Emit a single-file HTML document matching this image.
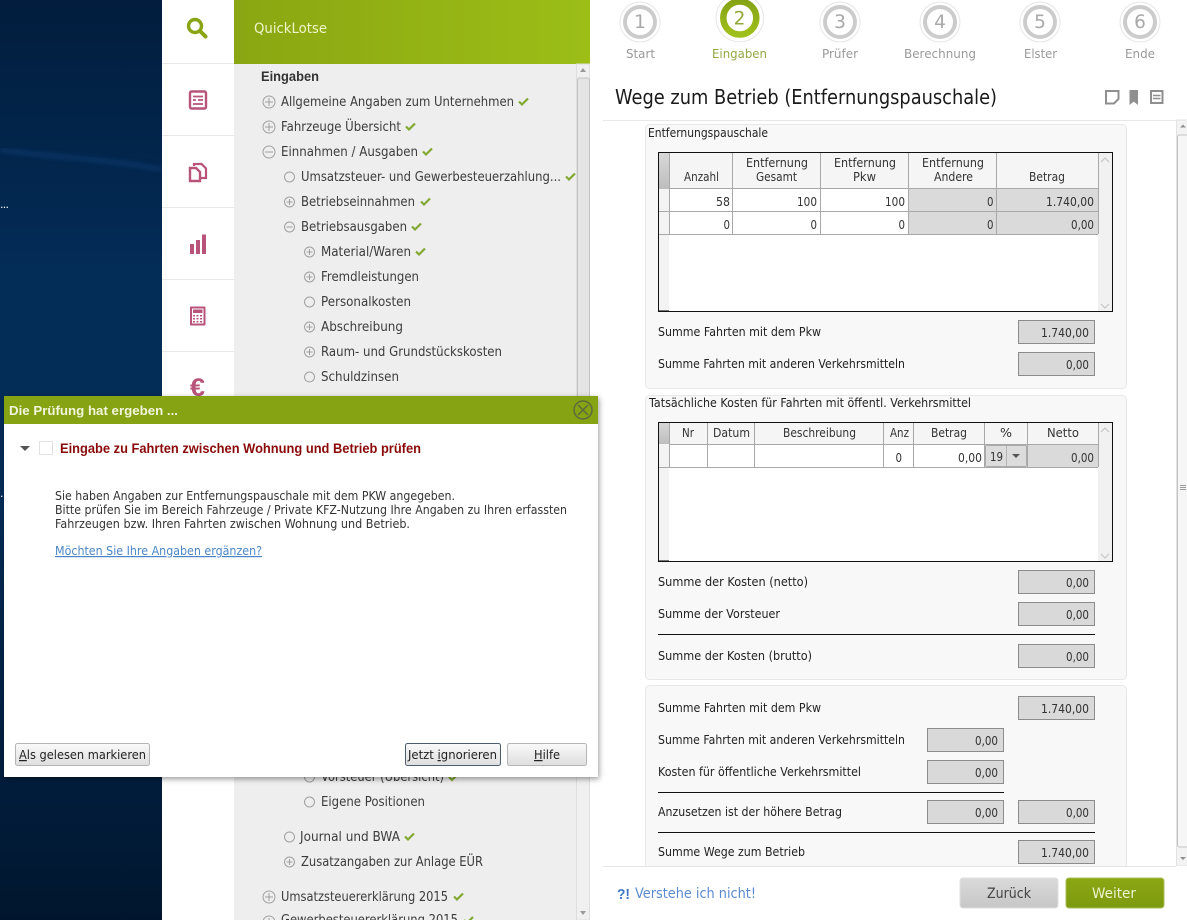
<!DOCTYPE html>
<html lang="de"><head><meta charset="utf-8"><title>Wege zum Betrieb</title>
<style>
html,body{margin:0;padding:0;width:1187px;height:920px;overflow:hidden;background:#fff}
svg{display:block;position:absolute;left:0;top:0}
text{font-family:"DejaVu Sans","Liberation Sans",sans-serif;white-space:pre}
.b{font-family:"Liberation Sans",sans-serif;font-weight:700}
.tr{font-size:13px;fill:#3c3c3c}
.lb{font-size:12px;fill:#222}
.th{font-size:12px;fill:#333}
.nu{font-size:12.5px;fill:#333}
.st{font-size:12.5px;fill:#9a9a9a}
.dg{font-size:18.5px;fill:#a8a8a8;text-anchor:middle}
.dl{font-size:12px;fill:#333}
.bt{font-size:12.5px;fill:#222}
.f{fill:#d9d9d9;stroke:#8c8c8c;stroke-width:1}
.ic{fill:none;stroke:#a0a0a0;stroke-width:1}
.ck{fill:none;stroke:#82a832;stroke-width:2.2}
.g{stroke:#a8a8a8;stroke-width:1;fill:none}
</style></head><body>
<svg width="1187" height="920" viewBox="0 0 1187 920" xmlns="http://www.w3.org/2000/svg">
<defs>
<linearGradient id="bg" x1="0" y1="0" x2="0" y2="1"><stop offset="0" stop-color="#021d3d"/><stop offset=".3" stop-color="#032c57"/><stop offset=".55" stop-color="#032c56"/><stop offset=".8" stop-color="#011f40"/><stop offset="1" stop-color="#01162e"/></linearGradient>
<linearGradient id="hd" x1="0" y1="0" x2="1" y2="0"><stop offset="0" stop-color="#8aa612"/><stop offset="1" stop-color="#9cbe17"/></linearGradient>
<linearGradient id="ring" x1="0" y1="0" x2="0" y2="1"><stop offset="0" stop-color="#86a314"/><stop offset="1" stop-color="#9fc01c"/></linearGradient>
<linearGradient id="bw" x1="0" y1="0" x2="0" y2="1"><stop offset="0" stop-color="#fafafa"/><stop offset="1" stop-color="#dedede"/></linearGradient>
<linearGradient id="zb" x1="0" y1="0" x2="0" y2="1"><stop offset="0" stop-color="#dadada"/><stop offset="1" stop-color="#c6c6c6"/></linearGradient>
<linearGradient id="wb" x1="0" y1="0" x2="0" y2="1"><stop offset="0" stop-color="#8ba713"/><stop offset="1" stop-color="#7d9a10"/></linearGradient>
<linearGradient id="rh" x1="0" y1="0" x2="0" y2="1"><stop offset="0" stop-color="#d8d8d8"/><stop offset="1" stop-color="#bdbdbd"/></linearGradient>
<filter id="sh" x="-5%" y="-5%" width="110%" height="110%"><feDropShadow dx="1" dy="2" stdDeviation="3" flood-color="#000" flood-opacity=".4"/></filter>
<filter id="bl"><feGaussianBlur stdDeviation="2.5"/></filter>
</defs>

<!-- desktop -->
<rect width="162" height="920" fill="url(#bg)"/>
<path d="M0 150C60 158 120 160 162 170" stroke="#0a4175" stroke-width="5" fill="none" opacity=".55" filter="url(#bl)"/>
<text x="0" y="208" font-size="11" fill="#fff" textLength="9">...</text>
<text x="0" y="497" font-size="11" fill="#fff">.</text>

<!-- icon rail -->
<rect x="162" width="72" height="920" fill="#fff"/>
<g stroke="#e8e8e8"><path d="M162 63.500H234M162 135.500H234M162 207.500H234M162 279.500H234M162 351.500H234"/></g>
<circle cx="195" cy="26" r="6.500" fill="none" stroke="#89a414" stroke-width="3.400"/>
<path d="M200 31L205.500 36.500" stroke="#89a414" stroke-width="4" stroke-linecap="round"/>
<g fill="none" stroke="#b8537a">
<rect x="190" y="91.500" width="16" height="17" rx="1.500" stroke-width="2.400"/>
<path d="M193 96.500H203M198 100H203M193 100H196M193 104H203" stroke-width="1.800"/>
<path d="M194 166V164H201.500L206 168.500V178H201" stroke-width="2.200"/>
<path d="M190 168H196L200 172V181H190Z" stroke-width="2.400"/>
</g>
<g fill="#b8537a">
<rect x="190" y="244" width="4" height="10"/><rect x="196" y="240" width="4" height="14"/><rect x="202" y="234.500" width="4" height="19.500"/>
<path d="M191 306.500H204.500a1 1 0 0 1 1 1V324.500a1 1 0 0 1-1 1H191a1 1 0 0 1-1-1V307.500a1 1 0 0 1 1-1ZM192 308.500V323.500H203.500V308.500Z" fill-rule="evenodd"/>
<rect x="193" y="309.500" width="9.500" height="3.500"/>
<path d="M193 315h2v1.500h-2zM196.500 315h2v1.500h-2zM200 315h2v1.500h-2zM193 318h2v1.500h-2zM196.500 318h2v1.500h-2zM200 318h2v1.500h-2zM193 321h2v1.500h-2zM196.500 321h2v1.500h-2zM200 321h2v1.500h-2z"/>
</g>
<text class="b" x="190" y="396" font-size="25" fill="#b8537a" textLength="15" lengthAdjust="spacingAndGlyphs">€</text>

<!-- tree panel -->
<rect x="234" width="356" height="920" fill="#eeeeee"/>
<rect x="234" width="356" height="64" fill="url(#hd)"/>
<text x="254" y="33" font-size="14" fill="#f0f5c8" textLength="73" lengthAdjust="spacingAndGlyphs">QuickLotse</text>
<rect x="576.500" y="64" width="13" height="856" fill="#f0f0f0" stroke="#dedede"/>
<rect x="577.500" y="78" width="12" height="500" rx="2" fill="#e4e4e4" stroke="#c2c2c2"/>
<path d="M580 72L583 68L586 72ZM580 911L586 911L583 915Z" fill="#9a9a9a"/>

<text class="b" x="261" y="81" font-size="13.500" fill="#333" textLength="58" lengthAdjust="spacingAndGlyphs">Eingaben</text>
<g class="tr">
<text class="tr" x="281" y="106" textLength="233" lengthAdjust="spacingAndGlyphs">Allgemeine Angaben zum Unternehmen</text>
<text class="tr" x="281" y="131" textLength="120" lengthAdjust="spacingAndGlyphs">Fahrzeuge Übersicht</text>
<text class="tr" x="281" y="156" textLength="137" lengthAdjust="spacingAndGlyphs">Einnahmen / Ausgaben</text>
<text class="tr" x="301" y="181" textLength="260" lengthAdjust="spacingAndGlyphs">Umsatzsteuer- und Gewerbesteuerzahlung...</text>
<text class="tr" x="301" y="206" textLength="114" lengthAdjust="spacingAndGlyphs">Betriebseinnahmen</text>
<text class="tr" x="301" y="231" textLength="106" lengthAdjust="spacingAndGlyphs">Betriebsausgaben</text>
<text class="tr" x="321" y="256" textLength="90" lengthAdjust="spacingAndGlyphs">Material/Waren</text>
<text class="tr" x="321" y="281" textLength="98" lengthAdjust="spacingAndGlyphs">Fremdleistungen</text>
<text class="tr" x="321" y="306" textLength="90" lengthAdjust="spacingAndGlyphs">Personalkosten</text>
<text class="tr" x="321" y="331" textLength="82" lengthAdjust="spacingAndGlyphs">Abschreibung</text>
<text class="tr" x="321" y="356" textLength="181" lengthAdjust="spacingAndGlyphs">Raum- und Grundstückskosten</text>
<text class="tr" x="321" y="381" textLength="78" lengthAdjust="spacingAndGlyphs">Schuldzinsen</text>
<text class="tr" x="321" y="781" textLength="123" lengthAdjust="spacingAndGlyphs">Vorsteuer (Übersicht)</text>
<text class="tr" x="321" y="806" textLength="104" lengthAdjust="spacingAndGlyphs">Eigene Positionen</text>
<text class="tr" x="300" y="841" textLength="100" lengthAdjust="spacingAndGlyphs">Journal und BWA</text>
<text class="tr" x="301" y="866" textLength="182" lengthAdjust="spacingAndGlyphs">Zusatzangaben zur Anlage EÜR</text>
<text class="tr" x="281" y="901" textLength="167" lengthAdjust="spacingAndGlyphs">Umsatzsteuererklärung 2015</text>
<text class="tr" x="281" y="924" textLength="177" lengthAdjust="spacingAndGlyphs">Gewerbesteuererklärung 2015</text>
</g>
<!-- tree icons -->
<g class="ic">
<circle cx="269" cy="102" r="6"/><path d="M265 102H273M269 98V106"/>
<circle cx="269" cy="127" r="6"/><path d="M265 127H273M269 123V131"/>
<circle cx="269" cy="152" r="6"/><path d="M265 152H273"/>
<circle cx="289.500" cy="177" r="5"/>
<circle cx="289.500" cy="202" r="5"/><path d="M286.500 202H292.500M289.500 199V205"/>
<circle cx="289.500" cy="227" r="5"/><path d="M286.500 227H292.500"/>
<circle cx="309.500" cy="252" r="5"/><path d="M306.500 252H312.500M309.500 249V255"/>
<circle cx="309.500" cy="277" r="5"/><path d="M306.500 277H312.500M309.500 274V280"/>
<circle cx="309.500" cy="302" r="5"/>
<circle cx="309.500" cy="327" r="5"/><path d="M306.500 327H312.500M309.500 324V330"/>
<circle cx="309.500" cy="352" r="5"/><path d="M306.500 352H312.500M309.500 349V355"/>
<circle cx="309.500" cy="377" r="5"/>
<circle cx="309.500" cy="777" r="5"/>
<circle cx="309.500" cy="802" r="5"/>
<circle cx="289.500" cy="837" r="5"/>
<circle cx="289.500" cy="862" r="5"/><path d="M286.500 862H292.500M289.500 859V865"/>
<circle cx="269" cy="897" r="6"/><path d="M265 897H273M269 893V901"/>
<circle cx="269" cy="922" r="6"/><path d="M265 922H273M269 918V926"/>
</g>
<g class="ck">
<path d="M519 101.500L522 104.500L528 98.500"/>
<path d="M406 126.500L409 129.500L415 123.500"/>
<path d="M423 151.500L426 154.500L432 148.500"/>
<path d="M566 176.500L569 179.500L575 173.500"/>
<path d="M421 201.500L424 204.500L430 198.500"/>
<path d="M412 226.500L415 229.500L421 223.500"/>
<path d="M416 251.500L419 254.500L425 248.500"/>
<path d="M449 777L452 780L458 774"/>
<path d="M405 836.500L408 839.500L414 833.500"/>
<path d="M454 896.500L457 899.500L463 893.500"/>
<path d="M464 920L467 923L473 917"/>
</g>

<!-- right pane -->
<rect x="590" width="597" height="920" fill="#fff"/>
<!-- steps -->
<g fill="none">
<circle cx="640" cy="22" r="20" stroke="#e6e6e6"/><circle cx="640" cy="22" r="15" stroke="#cccccc" stroke-width="4"/>
<circle cx="840" cy="22" r="20" stroke="#e6e6e6"/><circle cx="840" cy="22" r="15" stroke="#cccccc" stroke-width="4"/>
<circle cx="940" cy="22" r="20" stroke="#e6e6e6"/><circle cx="940" cy="22" r="15" stroke="#cccccc" stroke-width="4"/>
<circle cx="1040" cy="22" r="20" stroke="#e6e6e6"/><circle cx="1040" cy="22" r="15" stroke="#cccccc" stroke-width="4"/>
<circle cx="1140" cy="22" r="20" stroke="#e6e6e6"/><circle cx="1140" cy="22" r="15" stroke="#cccccc" stroke-width="4"/>
<circle cx="739.800" cy="18" r="23.800" stroke="#e6e6e6"/><circle cx="739.800" cy="18" r="16.500" stroke="url(#ring)" stroke-width="6.500"/>
</g>
<text class="dg" x="640" y="28">1</text><text class="dg" x="739.500" y="24.500" style="fill:#90a83a">2</text><text class="dg" x="840" y="28">3</text><text class="dg" x="940" y="28">4</text><text class="dg" x="1040" y="28">5</text><text class="dg" x="1140" y="28">6</text>
<text class="st" x="626" y="58" textLength="29" lengthAdjust="spacingAndGlyphs">Start</text>
<text class="st" x="712" y="58" textLength="55" lengthAdjust="spacingAndGlyphs" style="fill:#93a843">Eingaben</text>
<text class="st" x="822" y="58" textLength="36" lengthAdjust="spacingAndGlyphs">Prüfer</text>
<text class="st" x="904" y="58" textLength="72" lengthAdjust="spacingAndGlyphs">Berechnung</text>
<text class="st" x="1024" y="58" textLength="33" lengthAdjust="spacingAndGlyphs">Elster</text>
<text class="st" x="1125" y="58" textLength="30" lengthAdjust="spacingAndGlyphs">Ende</text>

<text x="615" y="104" font-size="20" fill="#1a1a1a" textLength="382" lengthAdjust="spacingAndGlyphs">Wege zum Betrieb (Entfernungspauschale)</text>
<g fill="none" stroke="#8f8f8f" stroke-width="2">
<path d="M1106 91H1118.500V99L1114 103.500H1106Z"/>
<path d="M1130 90.500H1137.500V104L1133.750 101L1130 104Z" fill="#8f8f8f" stroke-width="1"/>
<rect x="1151" y="91" width="11.500" height="12"/><path d="M1153 95.500H1160.500M1153 98.500H1160.500" stroke-width="1.500"/>
</g>
<path d="M603 120.500H1177" stroke="#e8e8e8"/>

<!-- right scrollbar -->
<rect x="1176.500" y="120" width="11" height="746" fill="#f3f3f3" stroke="#e2e2e2"/>
<rect x="1177.500" y="135" width="11" height="712" rx="2" fill="#f6f6f6" stroke="#c4c4c4"/>
<path d="M1180 127.500L1183 124.500L1186 127.500ZM1180 857L1186 857L1183 860Z" fill="#8f8f8f"/>
<path d="M1180 485.500H1186M1180 487.500H1186M1180 489.500H1186" stroke="#999"/>

<!-- panels -->
<g fill="#f8f8f8" stroke="#e8e8e8">
<rect x="645.500" y="124.500" width="481" height="264" rx="4"/>
<rect x="645.500" y="395.500" width="481" height="284" rx="4"/>
<rect x="645.500" y="685.500" width="481" height="190" rx="4"/>
</g>

<text class="lb" x="648" y="137" textLength="120" lengthAdjust="spacingAndGlyphs">Entfernungspauschale</text>
<text class="lb" x="649" y="407" textLength="322" lengthAdjust="spacingAndGlyphs">Tatsächliche Kosten für Fahrten mit öffentl. Verkehrsmittel</text>

<!-- table 1 -->
<rect x="658.500" y="152.500" width="454" height="159" fill="#fff"/>
<rect x="659" y="153" width="439" height="36" fill="#f5f5f5"/>
<rect x="659" y="153" width="10" height="36" fill="url(#rh)"/>
<rect x="659" y="189" width="10" height="122" fill="#f3f3f3"/>
<rect x="908" y="189" width="190" height="45" fill="#dadada"/>
<rect x="1098" y="153" width="14" height="158" fill="#f1f1f1"/>
<path class="g" d="M669.500 153V234M732.500 153V234M820.500 153V234M908.500 153V234M996.500 153V234M1098.500 153V234M669 188.500H1098M659 211.500H1098M659 234.500H1098"/>
<path d="M1101 162L1105 158L1109 162M1101 304L1105 308L1109 304" fill="none" stroke="#c2c2c2"/>
<path d="M659 310.500H669" stroke="#777"/>
<rect x="658.500" y="152.500" width="454" height="159" fill="none" stroke="#111"/>
<text class="th" x="684" y="181" textLength="35" lengthAdjust="spacingAndGlyphs">Anzahl</text>
<text class="th" x="746" y="167" textLength="62" lengthAdjust="spacingAndGlyphs">Entfernung</text>
<text class="th" x="756" y="181" textLength="41" lengthAdjust="spacingAndGlyphs">Gesamt</text>
<text class="th" x="834" y="167" textLength="62" lengthAdjust="spacingAndGlyphs">Entfernung</text>
<text class="th" x="853" y="181" textLength="23" lengthAdjust="spacingAndGlyphs">Pkw</text>
<text class="th" x="922" y="167" textLength="62" lengthAdjust="spacingAndGlyphs">Entfernung</text>
<text class="th" x="934" y="181" textLength="39" lengthAdjust="spacingAndGlyphs">Andere</text>
<text class="th" x="1029" y="181" textLength="36" lengthAdjust="spacingAndGlyphs">Betrag</text>
<text class="nu" x="716" y="206" textLength="14" lengthAdjust="spacingAndGlyphs">58</text>
<text class="nu" x="797" y="206" textLength="20" lengthAdjust="spacingAndGlyphs">100</text>
<text class="nu" x="885" y="206" textLength="20" lengthAdjust="spacingAndGlyphs">100</text>
<text class="nu" x="987" y="206" textLength="6.500" lengthAdjust="spacingAndGlyphs">0</text>
<text class="nu" x="1046" y="206" textLength="48" lengthAdjust="spacingAndGlyphs">1.740,00</text>
<text class="nu" x="723.500" y="229" textLength="6.500" lengthAdjust="spacingAndGlyphs">0</text>
<text class="nu" x="810.500" y="229" textLength="6.500" lengthAdjust="spacingAndGlyphs">0</text>
<text class="nu" x="898.500" y="229" textLength="6.500" lengthAdjust="spacingAndGlyphs">0</text>
<text class="nu" x="987" y="229" textLength="6.500" lengthAdjust="spacingAndGlyphs">0</text>
<text class="nu" x="1071" y="229" textLength="23" lengthAdjust="spacingAndGlyphs">0,00</text>

<!-- table 2 -->
<rect x="658.500" y="422.500" width="454" height="139" fill="#fff"/>
<rect x="659" y="423" width="439" height="21" fill="#f5f5f5"/>
<rect x="659" y="423" width="10" height="21" fill="url(#rh)"/>
<rect x="659" y="444" width="10" height="117" fill="#f3f3f3"/>
<rect x="1027" y="444" width="71" height="23" fill="#dadada"/>
<rect x="1098" y="423" width="14" height="138" fill="#f1f1f1"/>
<path class="g" d="M669.500 423V467M707.500 423V467M754.500 423V467M883.500 423V467M913.500 423V467M984.500 423V467M1027.500 423V467M1098.500 423V467M669 444.500H1098M659 467.500H1098"/>
<rect x="985.500" y="445.500" width="41" height="21" rx="1" fill="#dcdcdc" stroke="#aaa"/>
<path d="M1006.500 446V466" stroke="#b5b5b5"/>
<path d="M1012 454H1020L1016 458Z" fill="#555"/>
<path d="M1101 432L1105 428L1109 432M1101 554L1105 558L1109 554" fill="none" stroke="#c2c2c2"/>
<path d="M659 560.500H669" stroke="#777"/>
<rect x="658.500" y="422.500" width="454" height="139" fill="none" stroke="#111"/>
<text class="th" x="682" y="437" textLength="12" lengthAdjust="spacingAndGlyphs">Nr</text>
<text class="th" x="713" y="437" textLength="37" lengthAdjust="spacingAndGlyphs">Datum</text>
<text class="th" x="783" y="437" textLength="73" lengthAdjust="spacingAndGlyphs">Beschreibung</text>
<text class="th" x="890" y="437" textLength="19" lengthAdjust="spacingAndGlyphs">Anz</text>
<text class="th" x="931" y="437" textLength="36" lengthAdjust="spacingAndGlyphs">Betrag</text>
<text class="th" x="1000" y="437" textLength="12" lengthAdjust="spacingAndGlyphs">%</text>
<text class="th" x="1047" y="437" textLength="32" lengthAdjust="spacingAndGlyphs">Netto</text>
<text class="nu" x="895.500" y="462" textLength="6.500" lengthAdjust="spacingAndGlyphs">0</text>
<text class="nu" x="958" y="462" textLength="24" lengthAdjust="spacingAndGlyphs">0,00</text>
<text class="nu" x="990" y="461" textLength="13" lengthAdjust="spacingAndGlyphs">19</text>
<text class="nu" x="1071" y="462" textLength="23" lengthAdjust="spacingAndGlyphs">0,00</text>

<!-- labels panel 1 -->
<text class="lb" x="658" y="336" textLength="163" lengthAdjust="spacingAndGlyphs">Summe Fahrten mit dem Pkw</text>
<text class="lb" x="658" y="368" textLength="247" lengthAdjust="spacingAndGlyphs">Summe Fahrten mit anderen Verkehrsmitteln</text>
<rect class="f" x="1018.500" y="320.500" width="76" height="23"/><text class="nu" x="1041" y="337" textLength="48" lengthAdjust="spacingAndGlyphs">1.740,00</text>
<rect class="f" x="1018.500" y="352.500" width="76" height="23"/><text class="nu" x="1066" y="369" textLength="23" lengthAdjust="spacingAndGlyphs">0,00</text>

<!-- labels panel 2 -->
<text class="lb" x="658" y="586" textLength="150" lengthAdjust="spacingAndGlyphs">Summe der Kosten (netto)</text>
<text class="lb" x="658" y="618" textLength="122" lengthAdjust="spacingAndGlyphs">Summe der Vorsteuer</text>
<text class="lb" x="658" y="660" textLength="154" lengthAdjust="spacingAndGlyphs">Summe der Kosten (brutto)</text>
<rect class="f" x="1018.500" y="570.500" width="76" height="23"/><text class="nu" x="1066" y="587" textLength="23" lengthAdjust="spacingAndGlyphs">0,00</text>
<rect class="f" x="1018.500" y="602.500" width="76" height="23"/><text class="nu" x="1066" y="619" textLength="23" lengthAdjust="spacingAndGlyphs">0,00</text>
<path d="M658 634.500H1095" stroke="#111"/>
<rect class="f" x="1018.500" y="644.500" width="76" height="23"/><text class="nu" x="1066" y="661" textLength="23" lengthAdjust="spacingAndGlyphs">0,00</text>

<!-- labels panel 3 -->
<text class="lb" x="658" y="712" textLength="163" lengthAdjust="spacingAndGlyphs">Summe Fahrten mit dem Pkw</text>
<text class="lb" x="658" y="744" textLength="247" lengthAdjust="spacingAndGlyphs">Summe Fahrten mit anderen Verkehrsmitteln</text>
<text class="lb" x="658" y="776" textLength="203" lengthAdjust="spacingAndGlyphs">Kosten für öffentliche Verkehrsmittel</text>
<text class="lb" x="658" y="816" textLength="184" lengthAdjust="spacingAndGlyphs">Anzusetzen ist der höhere Betrag</text>
<text class="lb" x="658" y="856" textLength="147" lengthAdjust="spacingAndGlyphs">Summe Wege zum Betrieb</text>
<rect class="f" x="1018.500" y="696.500" width="76" height="23"/><text class="nu" x="1041" y="713" textLength="48" lengthAdjust="spacingAndGlyphs">1.740,00</text>
<rect class="f" x="927.500" y="728.500" width="76" height="23"/><text class="nu" x="975" y="745" textLength="23" lengthAdjust="spacingAndGlyphs">0,00</text>
<rect class="f" x="927.500" y="760.500" width="76" height="23"/><text class="nu" x="975" y="777" textLength="23" lengthAdjust="spacingAndGlyphs">0,00</text>
<path d="M658 792.500H1004" stroke="#111"/>
<rect class="f" x="927.500" y="800.500" width="76" height="23"/><text class="nu" x="975" y="817" textLength="23" lengthAdjust="spacingAndGlyphs">0,00</text>
<rect class="f" x="1018.500" y="800.500" width="76" height="23"/><text class="nu" x="1066" y="817" textLength="23" lengthAdjust="spacingAndGlyphs">0,00</text>
<path d="M658 832.500H1095" stroke="#111"/>
<rect class="f" x="1018.500" y="840.500" width="76" height="23"/><text class="nu" x="1041" y="857" textLength="48" lengthAdjust="spacingAndGlyphs">1.740,00</text>

<!-- footer -->
<rect x="590" y="866" width="597" height="54" fill="#fff"/>
<path d="M603 866.500H1176" stroke="#e4e4e4"/>
<text class="b" x="617" y="899" font-size="15" fill="#3d78c4" textLength="13" lengthAdjust="spacingAndGlyphs">?!</text>
<text x="635" y="898" font-size="14" fill="#5b8bd0" textLength="121" lengthAdjust="spacingAndGlyphs">Verstehe ich nicht!</text>
<rect x="960" y="878" width="98" height="30" rx="3" fill="url(#zb)" stroke="#e0e0e0"/>
<text x="987" y="898" font-size="14.500" fill="#444" textLength="44" lengthAdjust="spacingAndGlyphs">Zurück</text>
<rect x="1066" y="878" width="98" height="30" rx="3" fill="url(#wb)" stroke="#a9bf57"/>
<text x="1092" y="898" font-size="14.500" fill="#eef3cf" textLength="44" lengthAdjust="spacingAndGlyphs">Weiter</text>

<!-- dialog -->
<rect x="4" y="396" width="594" height="381" fill="#fff" filter="url(#sh)"/>
<rect x="4" y="396" width="594" height="28" fill="#86a313"/>
<text class="b" x="9" y="415" font-size="13" fill="#f2f5dc" textLength="169" lengthAdjust="spacingAndGlyphs">Die Prüfung hat ergeben ...</text>
<circle cx="583" cy="410" r="9" fill="none" stroke="#5b6b3c" stroke-width="1.500"/>
<path d="M578 405L588 415M588 405L578 415" stroke="#5b6b3c" stroke-width="1.500"/>
<path d="M20 446H30L25 451Z" fill="#555"/>
<rect x="39.500" y="441.500" width="13" height="13" fill="#fff" stroke="#e2e2e2"/>
<text class="b" x="60" y="453" font-size="13.500" fill="#8a0a0a" textLength="361" lengthAdjust="spacingAndGlyphs">Eingabe zu Fahrten zwischen Wohnung und Betrieb prüfen</text>
<text class="dl" x="55" y="500" textLength="400" lengthAdjust="spacingAndGlyphs">Sie haben Angaben zur Entfernungspauschale mit dem PKW angegeben.</text>
<text class="dl" x="55" y="514" textLength="512" lengthAdjust="spacingAndGlyphs">Bitte prüfen Sie im Bereich Fahrzeuge / Private KFZ-Nutzung Ihre Angaben zu Ihren erfassten</text>
<text class="dl" x="55" y="528" textLength="355" lengthAdjust="spacingAndGlyphs">Fahrzeugen bzw. Ihren Fahrten zwischen Wohnung und Betrieb.</text>
<text x="55" y="555" font-size="12" fill="#4a86c5" text-decoration="underline" textLength="207" lengthAdjust="spacingAndGlyphs">Möchten Sie Ihre Angaben ergänzen?</text>
<rect x="15.500" y="743.500" width="134" height="22" rx="2" fill="url(#bw)" stroke="#b5b5b5"/>
<text class="bt" x="19" y="759" textLength="127" lengthAdjust="spacingAndGlyphs"><tspan text-decoration="underline">A</tspan>ls gelesen markieren</text>
<rect x="405.500" y="743.500" width="95" height="22" rx="2" fill="url(#bw)" stroke="#4c5d6e"/>
<text class="bt" x="408" y="759" textLength="89" lengthAdjust="spacingAndGlyphs">Jetzt <tspan text-decoration="underline">i</tspan>gnorieren</text>
<rect x="507.500" y="743.500" width="79" height="22" rx="2" fill="url(#bw)" stroke="#b5b5b5"/>
<text class="bt" x="534" y="759" textLength="26" lengthAdjust="spacingAndGlyphs"><tspan text-decoration="underline">H</tspan>ilfe</text>
</svg>
</body></html>
